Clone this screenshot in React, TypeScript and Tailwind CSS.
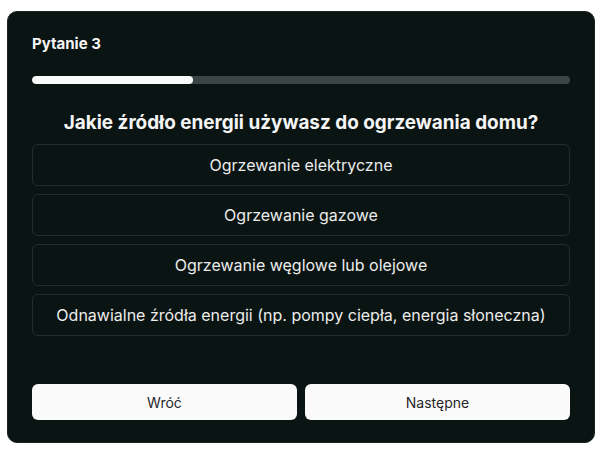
import React, { useState } from 'react';

const options = [
  'Ogrzewanie elektryczne',
  'Ogrzewanie gazowe',
  'Ogrzewanie węglowe lub olejowe',
  'Odnawialne źródła energii (np. pompy ciepła, energia słoneczna)',
];

export default function App() {
  const [selected, setSelected] = useState<number | null>(null);
  const progress = 30;

  return (
    <div className="w-[607px] h-[456px] bg-white pt-[11px] pl-[7px]" style={{ fontFamily: 'Inter, "Noto Sans", sans-serif' }}>
      <div className="w-[588px] h-[432px] bg-[#0a1412] border border-[#1c2422] rounded-[10px] px-6 pt-[22px] flex flex-col">
        <h2 className="text-[15px] leading-5 font-bold text-[#f5f5f5]">Pytanie 3</h2>

        <div className="mt-[22px] h-2 w-full rounded-full bg-[#3a4643] overflow-hidden">
          <div className="h-full bg-[#fafafa] rounded-full" style={{ width: `${progress}%` }} />
        </div>

        <h1 className="mt-[25px] text-center text-[18.9px] leading-7 font-bold text-[#f5f5f5]">
          Jakie źródło energii używasz do ogrzewania domu?
        </h1>

        <div className="mt-[7px] flex flex-col gap-2">
          {options.map((opt, i) => (
            <button
              key={opt}
              onClick={() => setSelected(i)}
              className={`h-[42px] w-full rounded-md border text-center text-[16px] text-[#ececec] ${
                selected === i ? 'border-[#fafafa]' : 'border-[#252d2b]'
              }`}
            >
              {opt}
            </button>
          ))}
        </div>

        <div className="mt-12 grid grid-cols-2 gap-2">
          <button className="h-9 rounded-md bg-[#fafafa] text-[14px] text-[#27272a]">Wróć</button>
          <button className="h-9 rounded-md bg-[#fafafa] text-[14px] text-[#27272a]">Następne</button>
        </div>
      </div>
    </div>
  );
}
